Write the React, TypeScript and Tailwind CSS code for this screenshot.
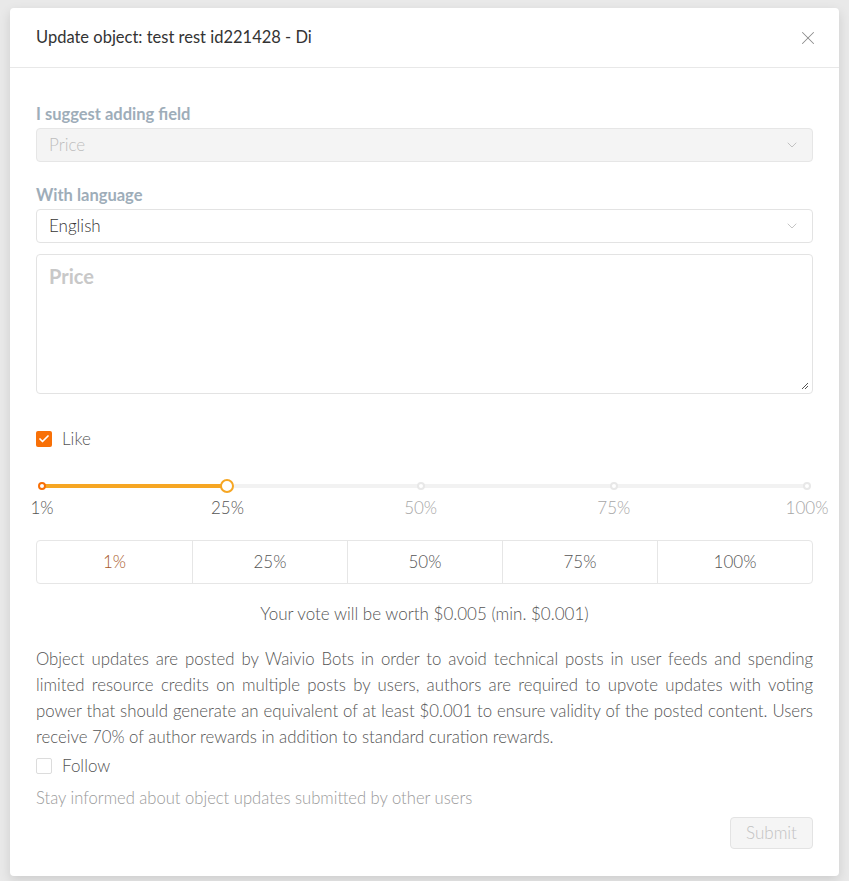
import { X, ChevronDown, Check } from 'lucide-react'

const MARKS = [
  { v: 1, label: '1%' },
  { v: 25, label: '25%' },
  { v: 50, label: '50%' },
  { v: 75, label: '75%' },
  { v: 100, label: '100%' },
]

const VALUE = 25
const pos = (v: number) => ((v - 1) / 99) * 100

function Select({ value, disabled }: { value: string; disabled?: boolean }) {
  return (
    <div
      className={`flex h-[34px] items-center justify-between rounded border px-3 text-[17px] ${
        disabled ? 'border-[#e6e6e6] bg-[#f4f4f4] text-[#bdbdbd]' : 'border-[#e3e3e3] bg-white text-[#353535]'
      }`}
    >
      <span>{value}</span>
      <ChevronDown size={16} strokeWidth={1} className="text-[#a8a8a8]" />
    </div>
  )
}

export default function App() {
  return (
    <div className="min-h-[881px] bg-[#e9e9e9] pt-2" style={{ fontFamily: 'Lato, "Noto Sans", sans-serif' }}>
      <div className="mx-[10px] rounded bg-white shadow-[0_4px_12px_rgba(0,0,0,0.12)]">
        {/* header */}
        <div className="flex h-[60px] items-center justify-between border-b border-[#e8e8e8] px-[26px]">
          <span className="text-[16.5px] text-[#333]">Update object: test rest id221428 - Di</span>
          <X size={22} strokeWidth={1.1} className="mr-[-6px] text-[#8c8c8c]" />
        </div>

        {/* body */}
        <div className="px-[26px] pb-[27px] pt-[36px] font-light">
          <div className="mb-1 text-[16.5px] font-bold leading-[20px] text-[#9eadb9]">I suggest adding field</div>
          <Select value="Price" disabled />

          <div className="mb-1 mt-[23px] text-[16.5px] font-bold leading-[20px] text-[#9eadb9]">With language</div>
          <Select value="English" />

          <div className="relative mt-[11px] h-[140px] rounded border border-[#e3e3e3] px-3 pt-[6px]">
            <span className="text-[20px] font-bold text-[#c8c8c8]">Price</span>
            <svg className="absolute bottom-[3px] right-[3px]" width="8" height="8" viewBox="0 0 8 8">
              <path d="M7 1 L1 7 M7 4 L4 7" stroke="#555" strokeWidth="1" />
            </svg>
          </div>

          {/* like */}
          <div className="mt-[35px] flex h-5 items-center gap-[10px]">
            <div className="flex h-4 w-4 items-center justify-center rounded-[2px] bg-[#f87007]">
              <Check size={12} strokeWidth={3.5} className="text-white" />
            </div>
            <span className="text-[17px] leading-5 text-[#555]">Like</span>
          </div>

          {/* slider */}
          <div className="mx-[6px] mt-[30px]">
            <div className="relative h-[14px]">
              <div className="absolute left-0 right-0 top-[5px] h-1 rounded-full bg-[#f2f2f2]" />
              <div className="absolute left-0 top-[5px] h-1 rounded-full bg-[#f6a623]" style={{ width: `${pos(VALUE)}%` }} />
              {MARKS.map((m) => (
                <div
                  key={m.v}
                  className={`absolute top-[3px] h-2 w-2 -translate-x-1/2 rounded-full border-2 bg-white ${
                    m.v <= VALUE ? 'border-[#f87007]' : 'border-[#e8e8e8]'
                  }`}
                  style={{ left: `${pos(m.v)}%` }}
                />
              ))}
              <div
                className="absolute top-0 h-[14px] w-[14px] -translate-x-1/2 rounded-full border-2 border-[#f6a623] bg-white"
                style={{ left: `${pos(VALUE)}%` }}
              />
            </div>
            <div className="relative mt-[5px] h-5">
              {MARKS.map((m) => (
                <span
                  key={m.v}
                  className={`absolute -translate-x-1/2 text-[17px] leading-5 ${m.v <= VALUE ? 'text-[#555]' : 'text-[#a6a6a6]'}`}
                  style={{ left: `${pos(m.v)}%` }}
                >
                  {m.label}
                </span>
              ))}
            </div>
          </div>

          {/* quick buttons */}
          <div className="mt-[22px] grid h-[44px] grid-cols-5 rounded border border-[#e6e6e6]">
            {MARKS.map((m, i) => (
              <div
                key={m.v}
                className={`flex items-center justify-center text-[17px] ${i > 0 ? 'border-l border-[#e6e6e6]' : ''} ${
                  i === 0 ? 'text-[#a8592a]' : 'text-[#555]'
                }`}
              >
                {m.label}
              </div>
            ))}
          </div>

          <div className="mt-[20px] text-center text-[17px] leading-5 text-[#555]">
            Your vote will be worth $0.005 (min. $0.001)
          </div>

          <p className="mt-[22px] text-justify text-[16.8px] leading-[26px] text-[#555]">
            Object updates are posted by Waivio Bots in order to avoid technical posts in user feeds and spending limited
            resource credits on multiple posts by users, authors are required to upvote updates with voting power that
            should generate an equivalent of at least $0.001 to ensure validity of the posted content. Users receive 70%
            of author rewards in addition to standard curation rewards.
          </p>

          <div className="mt-[6px] flex h-5 items-center gap-[10px]">
            <div className="h-4 w-4 rounded-[2px] border border-[#dcdcdc] bg-white" />
            <span className="text-[17px] leading-5 text-[#555]">Follow</span>
          </div>

          <div className="mt-[12px] text-[16.6px] leading-5 text-[#9a9a9a]">
            Stay informed about object updates submitted by other users
          </div>

          <div className="mt-[9px] flex justify-end">
            <div className="flex h-[32px] w-[83px] items-center justify-center rounded border border-[#e3e3e3] bg-[#f5f5f5] text-[17px] text-[#c2c2c2]">
              Submit
            </div>
          </div>
        </div>
      </div>
    </div>
  )
}
